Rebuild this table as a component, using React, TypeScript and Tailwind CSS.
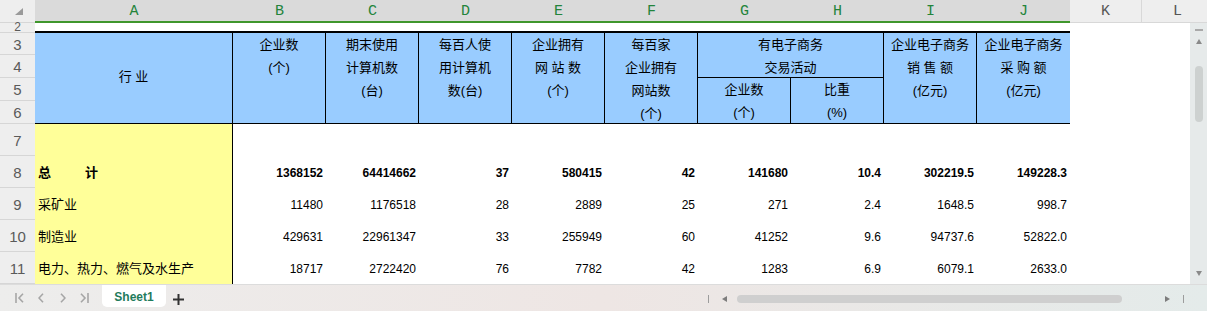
import React from 'react';

const letters = ['A', 'B', 'C', 'D', 'E', 'F', 'G', 'H', 'I', 'J'];
const letterCols = [
  'col-start-2',
  'col-start-3',
  'col-start-4',
  'col-start-5',
  'col-start-6',
  'col-start-7',
  'col-start-8',
  'col-start-9',
  'col-start-10',
  'col-start-11',
];
const dataCols = letterCols.slice(1);

const rowHeadPos = [
  'row-start-3',
  'row-start-4',
  'row-start-5',
  'row-start-6',
  'row-start-7',
  'row-start-8',
  'row-start-9',
  'row-start-10',
  'row-start-11',
];

const dataRowPos = ['row-start-8', 'row-start-9', 'row-start-10', 'row-start-11'];

const rows = [
  {
    name: '总计',
    bold: true,
    vals: ['1368152', '64414662', '37', '580415', '42', '141680', '10.4', '302219.5', '149228.3'],
  },
  { name: '采矿业', vals: ['11480', '1176518', '28', '2889', '25', '271', '2.4', '1648.5', '998.7'] },
  { name: '制造业', vals: ['429631', '22961347', '33', '255949', '60', '41252', '9.6', '94737.6', '52822.0'] },
  {
    name: '电力、热力、燃气及水生产',
    vals: ['18717', '2722420', '76', '7782', '42', '1283', '6.9', '6079.1', '2633.0'],
  },
];

// header cell of the blue block, one line per sheet row
function HeadCell({ pos, lines, last }: { pos: string; lines: string[]; last?: boolean }) {
  return (
    <div
      className={`bg-[#99ccff] border-b border-black flex flex-col items-center text-[13px] leading-[23px] ${
        last ? '' : 'border-r'
      } ${pos}`}
    >
      {lines.map((l, i) => (
        <span key={i} className="whitespace-pre">
          {l}
        </span>
      ))}
    </div>
  );
}

function Chevron({ dir }: { dir: 'first' | 'prev' | 'next' | 'last' }) {
  if (dir === 'first')
    return (
      <svg width="9" height="10" viewBox="0 0 9 10" fill="none" stroke="#a6a6a6" strokeWidth="1.6">
        <line x1="1" y1="0" x2="1" y2="10" />
        <polyline points="8,0.8 4,5 8,9.2" />
      </svg>
    );
  if (dir === 'prev')
    return (
      <svg width="6" height="10" viewBox="0 0 6 10" fill="none" stroke="#a6a6a6" strokeWidth="1.6">
        <polyline points="5,0.8 1,5 5,9.2" />
      </svg>
    );
  if (dir === 'next')
    return (
      <svg width="6" height="10" viewBox="0 0 6 10" fill="none" stroke="#a6a6a6" strokeWidth="1.6">
        <polyline points="1,0.8 5,5 1,9.2" />
      </svg>
    );
  return (
    <svg width="9" height="10" viewBox="0 0 9 10" fill="none" stroke="#a6a6a6" strokeWidth="1.6">
      <polyline points="1,0.8 5,5 1,9.2" />
      <line x1="8" y1="0" x2="8" y2="10" />
    </svg>
  );
}

export default function App() {
  return (
    <div className="w-[1207px] h-[311px] overflow-hidden bg-white flex flex-col text-black font-['Liberation_Sans','Noto_Sans_CJK_SC',sans-serif]">
      <div className="grid grid-cols-[35px_198px_repeat(9,93px)_72px_48px_17px] grid-rows-[23px_10px_22px_23px_23px_23px_32px_32px_32px_32px_32px]">
        {/* corner */}
        <div className="col-start-1 row-start-1 bg-[#eeeeee] border-b border-[#d6d6d6] flex items-center justify-center pl-[3px] pt-[1px]">
          <svg width="8" height="7" viewBox="0 0 8 7">
            <polygon points="8,0 8,7 0,7" fill="#9a9a9a" />
          </svg>
        </div>

        {/* column letters */}
        {letters.map((c, i) => (
          <div
            key={c}
            className={`${letterCols[i]} row-start-1 bg-[#dadada] border-b-2 border-[#3f962c] flex items-center justify-center pt-[3px] font-['Liberation_Mono',monospace] text-[15px] text-[#23843a]`}
          >
            {c}
          </div>
        ))}
        <div className="col-start-12 row-start-1 bg-[#eeeeee] border-b border-r border-[#d8d8d8] flex items-center justify-center pt-[3px] font-['Liberation_Mono',monospace] text-[15px] text-[#555555]">
          K
        </div>
        <div className="col-start-13 col-span-2 row-start-1 bg-[#eeeeee] border-b border-[#d8d8d8] flex items-center justify-center pt-[3px] pl-[6px] font-['Liberation_Mono',monospace] text-[15px] text-[#555555]">
          L
        </div>

        {/* row numbers */}
        <div className="col-start-1 row-start-2 bg-[#eeeeee] border-b border-[#d6d6d6] flex items-end justify-center text-[12px] leading-[9px] text-[#5a5a5a]">
          2
        </div>
        {rowHeadPos.map((p, i) => (
          <div
            key={p}
            className={`col-start-1 ${p} bg-[#eeeeee] border-b border-[#d6d6d6] flex items-center justify-center pt-[1px] text-[15px] leading-none text-[#5a5a5a]`}
          >
            {i + 3}
          </div>
        ))}

        {/* row 2: thick rule above the table */}
        <div className="col-start-2 col-span-10 row-start-2 border-b-2 border-black" />

        {/* table head */}
        <div className="col-start-2 row-start-3 row-span-4 bg-[#99ccff] border-b border-r border-black flex items-center justify-center text-[13px] pb-[2px]">
          行 业
        </div>
        <HeadCell pos="col-start-3 row-start-3 row-span-4" lines={['企业数', '(个)']} />
        <HeadCell pos="col-start-4 row-start-3 row-span-4" lines={['期末使用', '计算机数', '(台)']} />
        <HeadCell pos="col-start-5 row-start-3 row-span-4" lines={['每百人使', '用计算机', '数(台)']} />
        <HeadCell pos="col-start-6 row-start-3 row-span-4" lines={['企业拥有', '网 站 数', '(个)']} />
        <HeadCell pos="col-start-7 row-start-3 row-span-4" lines={['每百家', '企业拥有', '网站数', '(个)']} />
        <HeadCell pos="col-start-8 col-span-2 row-start-3 row-span-2" lines={['有电子商务', '交易活动']} />
        <HeadCell pos="col-start-8 row-start-5 row-span-2" lines={['企业数', '(个)']} />
        <HeadCell pos="col-start-9 row-start-5 row-span-2" lines={['比重', '(%)']} />
        <HeadCell pos="col-start-10 row-start-3 row-span-4" lines={['企业电子商务', '销 售 额', '(亿元)']} />
        <HeadCell pos="col-start-11 row-start-3 row-span-4" lines={['企业电子商务', '采 购 额', '(亿元)']} last />

        {/* row 7: blank */}
        <div className="col-start-2 row-start-7 bg-[#ffff99] border-r border-black" />

        {/* data rows */}
        {rows.map((r, ri) => (
          <React.Fragment key={r.name}>
            <div
              className={`col-start-2 ${dataRowPos[ri]} bg-[#ffff99] border-r border-black flex items-center pl-[3px] pt-[1px] text-[13px] whitespace-nowrap ${
                r.bold ? 'font-bold' : ''
              }`}
            >
              {r.bold ? (
                <>
                  <span>总</span>
                  <span className="ml-[34px]">计</span>
                </>
              ) : (
                r.name
              )}
            </div>
            {r.vals.map((v, vi) => (
              <div
                key={vi}
                className={`${dataCols[vi]} ${dataRowPos[ri]} flex items-center justify-end pr-[3px] pt-[1px] text-[12px] ${
                  r.bold ? 'font-bold' : ''
                }`}
              >
                {v}
              </div>
            ))}
          </React.Fragment>
        ))}

        {/* vertical scrollbar */}
        <div className="col-start-14 row-start-2 row-span-10 bg-[#e6eaea] flex flex-col items-center pt-[6px] pb-[8px]">
          <div className="w-[8px] h-[1.5px] bg-[#a9a9a9]" />
          <svg className="mt-[8px]" width="6" height="5" viewBox="0 0 6 5">
            <polygon points="3,0 6,5 0,5" fill="#8a8a8a" />
          </svg>
          <div className="mt-[22px] w-[8px] h-[56px] rounded-full bg-[#cdd1d0]" />
          <svg className="mt-auto" width="6" height="5" viewBox="0 0 6 5">
            <polygon points="0,0 6,0 3,5" fill="#8a8a8a" />
          </svg>
        </div>
      </div>

      {/* sheet tabs + horizontal scrollbar */}
      <div className="h-[27px] border-t border-[#dcdcdc] bg-linear-to-r from-[#ededec] via-[#eee6e4] to-[#e4ebea] flex items-center pl-[15px]">
        <Chevron dir="first" />
        <span className="ml-[14px] flex">
          <Chevron dir="prev" />
        </span>
        <span className="ml-[16px] flex">
          <Chevron dir="next" />
        </span>
        <span className="ml-[14px] flex">
          <Chevron dir="last" />
        </span>
        <div className="ml-[13px] self-start w-[64px] h-[22px] bg-white rounded-b-[5px] flex items-center justify-center pt-[2px] text-[12px] font-bold text-[#1f7b5c]">
          Sheet1
        </div>
        <svg className="ml-[7px] mt-[2px]" width="11" height="11" viewBox="0 0 11 11" stroke="#333333" strokeWidth="2">
          <line x1="5.5" y1="0" x2="5.5" y2="11" />
          <line x1="0" y1="5.5" x2="11" y2="5.5" />
        </svg>

        <div className="ml-auto flex items-center pr-[23px] pt-[1px]">
          <div className="w-[1px] h-[8px] bg-[#9c9c9c]" />
          <svg className="ml-[13px]" width="5" height="6" viewBox="0 0 5 6">
            <polygon points="5,0 5,6 0,3" fill="#7d7d7d" />
          </svg>
          <div className="ml-[10px] w-[385px] h-[8px] rounded-full bg-[#cfcfcf]" />
          <svg className="ml-[43px]" width="5" height="6" viewBox="0 0 5 6">
            <polygon points="0,0 5,3 0,6" fill="#7d7d7d" />
          </svg>
          <div className="ml-[13px] w-[1px] h-[8px] bg-[#9c9c9c]" />
        </div>
      </div>
    </div>
  );
}
